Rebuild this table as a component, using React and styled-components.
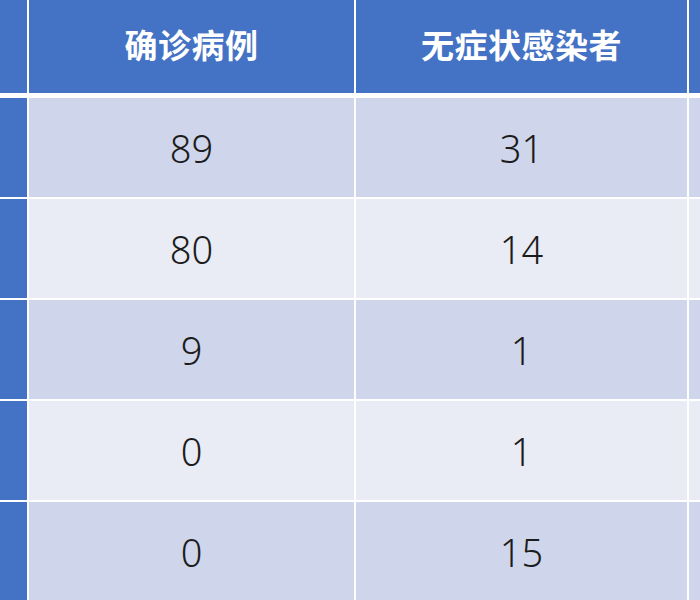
import React from 'react'
import styled, { createGlobalStyle } from 'styled-components'

const GlobalStyle = createGlobalStyle`
    html, body {
        margin: 0;
        padding: 0;
        background: #ffffff;
        overflow: hidden;
    }
`

const Table = styled.div`
    width: 700px;
    height: 600px;
    overflow: hidden;
    display: flex;
    flex-direction: column;
    gap: 2px;
    background: #ffffff;
`

const Row = styled.div`
    display: grid;
    grid-template-columns: 27px 325px 331px 1fr;
    column-gap: 2px;
    height: ${props => props.$head ? '93px' : '99px'};
    flex-shrink: 0;
    margin-bottom: ${props => props.$head ? '3px' : '0'};
`

const SideCell = styled.div`
    background: #4472C4;
`

const HeadCell = styled.div`
    background: #4472C4;
    color: #ffffff;
    display: flex;
    align-items: center;
    justify-content: center;
    padding-bottom: 5px;
    font-family: "Noto Sans CJK SC", "Noto Sans", sans-serif;
    font-weight: 700;
    font-size: 33px;
    letter-spacing: 0.5px;
`

const Cell = styled.div`
    background: ${props => props.$odd ? '#CFD5EA' : '#E9EBF5'};
    color: #1c1c1c;
    display: flex;
    align-items: center;
    justify-content: center;
    font-family: "Noto Sans", "Noto Sans CJK SC", sans-serif;
    font-weight: 300;
    font-size: 38px;
`

const rows = [
    { confirmed: 89, asymptomatic: 31 },
    { confirmed: 80, asymptomatic: 14 },
    { confirmed: 9, asymptomatic: 1 },
    { confirmed: 0, asymptomatic: 1 },
    { confirmed: 0, asymptomatic: 15 },
]

export default function App() {
    return (
        <>
            <GlobalStyle />
            <Table>
                <Row $head>
                    <SideCell />
                    <HeadCell>确诊病例</HeadCell>
                    <HeadCell>无症状感染者</HeadCell>
                    <HeadCell />
                </Row>
                {rows.map((r, i) => (
                    <Row key={i}>
                        <SideCell />
                        <Cell $odd={i % 2 === 0}>{r.confirmed}</Cell>
                        <Cell $odd={i % 2 === 0}>{r.asymptomatic}</Cell>
                        <Cell $odd={i % 2 === 0} />
                    </Row>
                ))}
            </Table>
        </>
    )
}
